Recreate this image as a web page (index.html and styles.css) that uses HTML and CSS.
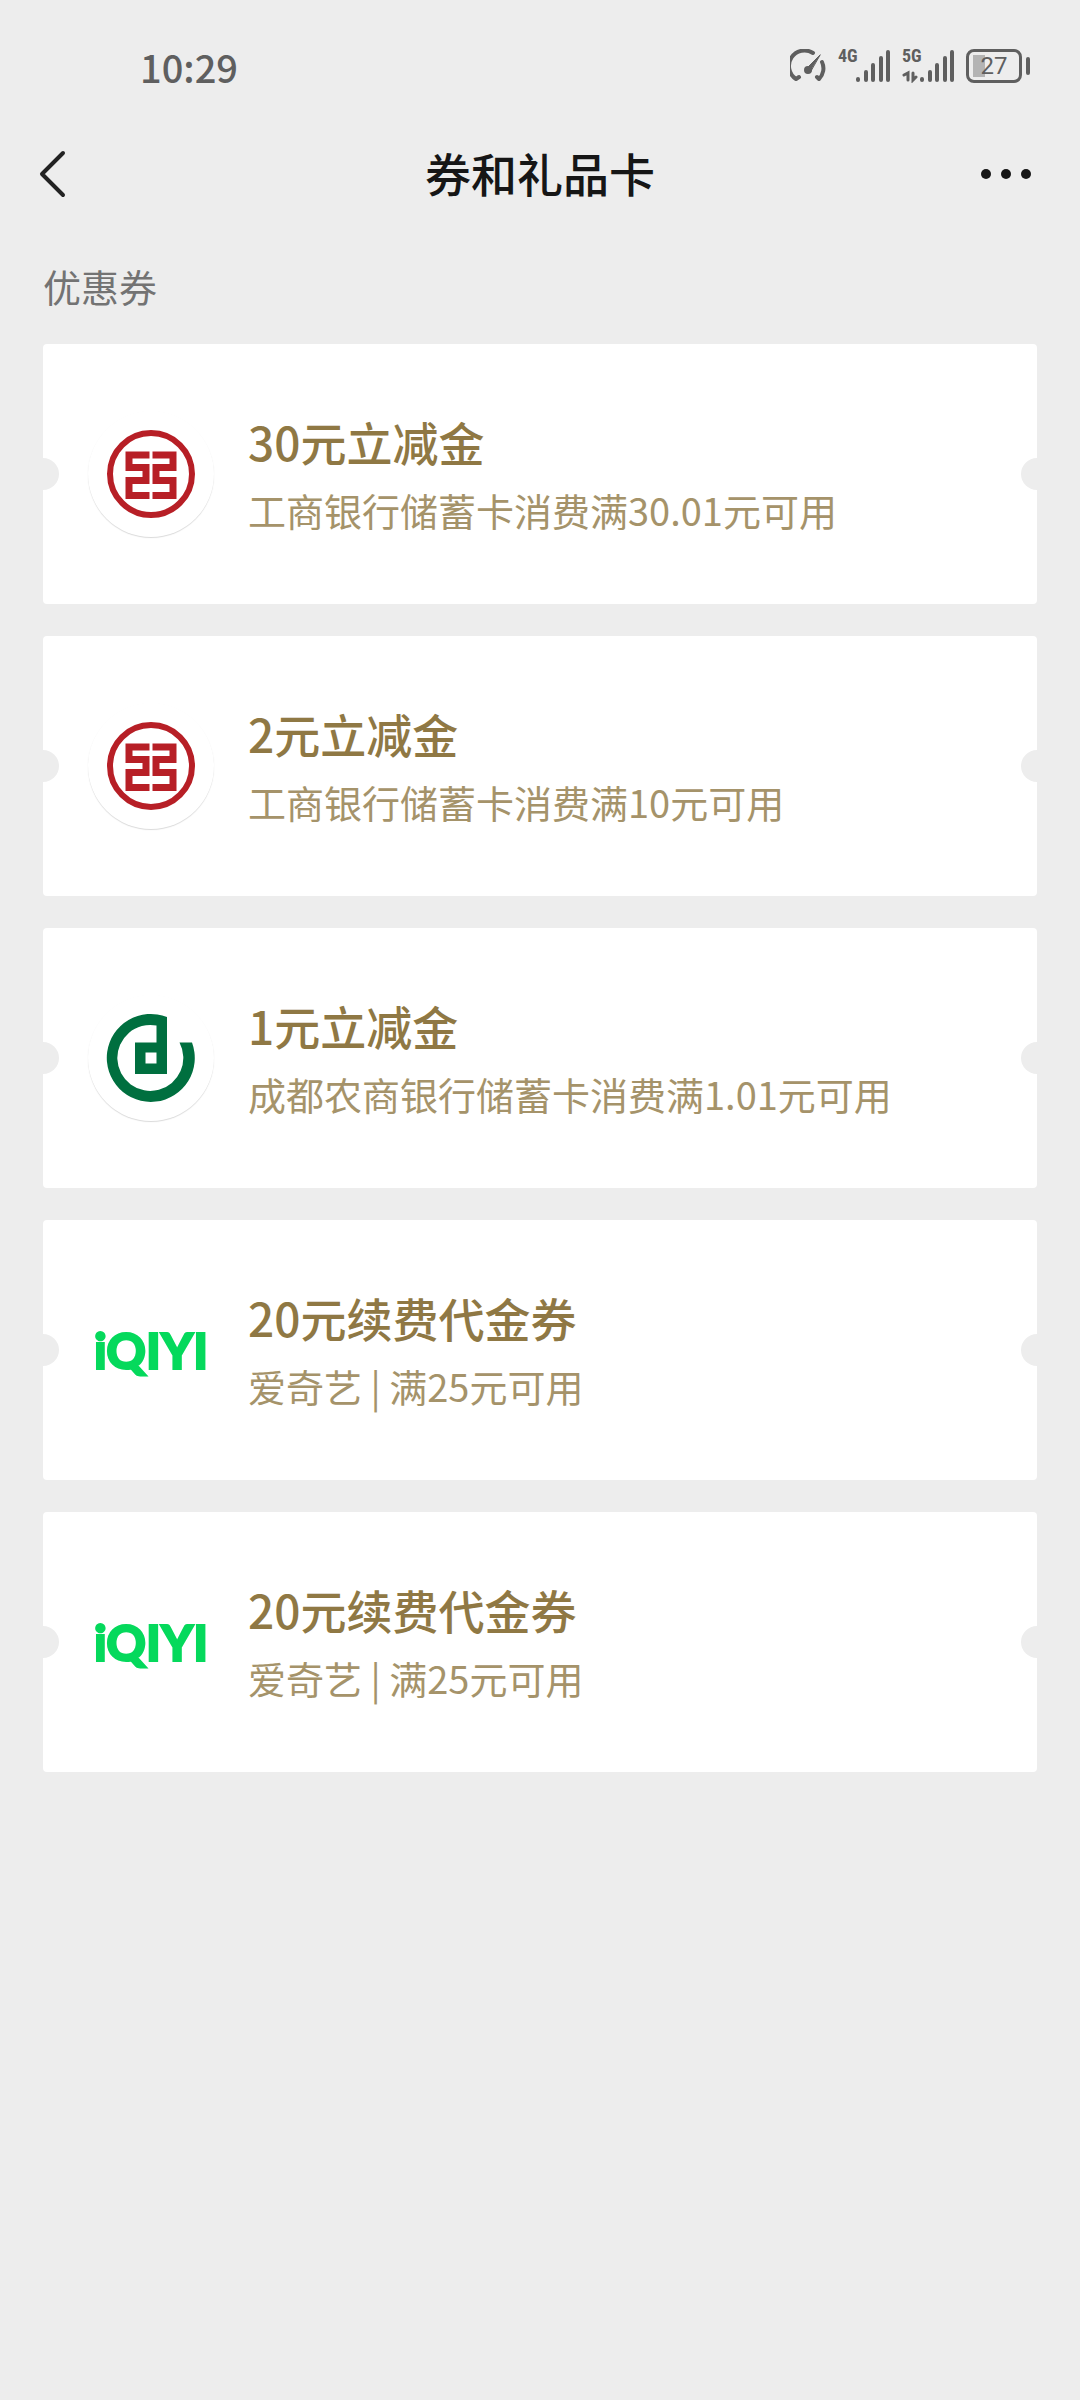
FILE: index.html
```
<!DOCTYPE html>
<html lang="zh-CN">

<head>
    <meta charset="UTF-8" />
    <meta name="viewport" content="width=device-width, initial-scale=1.0" />
    <title>券和礼品卡</title>
    <link rel="stylesheet" href="styles.css">
</head>

<body>
    <!-- logos reused by the coupons -->
    <svg class="defs" aria-hidden="true">
        <symbol id="icbc" viewBox="0 0 126 126">
            <circle cx="63" cy="63" r="41" fill="none" stroke="#b71f26" stroke-width="6" />
            <g fill="none" stroke="#b71f26" stroke-width="7">
                <path d="M61.5 44H41V56.5H58V69.5H41V84.5H61.5" />
                <path d="M64.5 44H85V56.5H68V69.5H85V84.5H64.5" />
            </g>
        </symbol>
        <symbol id="cdrcb" viewBox="0 0 126 126">
            <path d="M79 22A44 44 0 1 0 104 47.5H91.5A33 33 0 1 1 68.5 30.5V47.5H47V79H79ZM57.5 57.5V68.5H68.5V57.5Z" fill="#006f3f" fill-rule="evenodd" />
        </symbol>
    </svg>

    <div class="status-bar">
        <span class="time">10:29</span>
        <div class="status-icons">
            <svg width="36" height="34" viewBox="0 0 36 34" fill="none" stroke="#5f5f5f" stroke-width="4" stroke-linecap="round" stroke-linejoin="round">
                <path d="M23 4A15 15 0 0 0 6 30L9 28" />
                <path d="M32 13A15 15 0 0 1 29 30L27 28" />
                <path d="M30 6L16 20L20 23Z" fill="#5f5f5f" stroke-width="1" />
                <circle cx="18" cy="21" r="2" fill="#5f5f5f" />
            </svg>
            <div class="signal">
                <span class="network">4G</span>
                <svg width="52" height="34" viewBox="0 0 52 34" stroke="#5f5f5f" stroke-width="4" stroke-linecap="round">
                    <path d="M20 30V31M28 23V31M35 16V31M43 9V31M50 3V31" />
                </svg>
            </div>
            <div class="signal">
                <span class="network">5G</span>
                <svg width="52" height="34" viewBox="0 0 52 34" stroke="#5f5f5f" stroke-width="4" stroke-linecap="round">
                    <path d="M20 30V31M28 23V31M35 16V31M43 9V31M50 3V31" />
                    <path d="M6 31V24L2 26M11 24V31L14 28" fill="none" stroke-width="3" />
                </svg>
            </div>
            <div class="battery">27</div>
        </div>
    </div>

    <header class="nav">
        <button class="nav-btn" aria-label="返回">
            <svg width="28" height="48" viewBox="0 0 28 48" fill="none" stroke="#222" stroke-width="4" stroke-linecap="round" stroke-linejoin="round">
                <path d="M24 3L3 24L24 45" />
            </svg>
        </button>
        <h1>券和礼品卡</h1>
        <button class="nav-btn more" aria-label="更多">
            <svg width="50" height="10" viewBox="0 0 50 10" fill="#161616">
                <circle cx="5" cy="5" r="5" />
                <circle cx="25" cy="5" r="5" />
                <circle cx="45" cy="5" r="5" />
            </svg>
        </button>
    </header>

    <main>
        <h2>优惠券</h2>
        <ul class="coupons">
            <li class="coupon">
                <div class="logo round"><svg><use href="#icbc" /></svg></div>
                <div class="info">
                    <h3>30元立减金</h3>
                    <p>工商银行储蓄卡消费满30.01元可用</p>
                </div>
            </li>
            <li class="coupon">
                <div class="logo round"><svg><use href="#icbc" /></svg></div>
                <div class="info">
                    <h3>2元立减金</h3>
                    <p>工商银行储蓄卡消费满10元可用</p>
                </div>
            </li>
            <li class="coupon">
                <div class="logo round"><svg><use href="#cdrcb" /></svg></div>
                <div class="info">
                    <h3>1元立减金</h3>
                    <p>成都农商银行储蓄卡消费满1.01元可用</p>
                </div>
            </li>
            <li class="coupon">
                <div class="logo iqiyi">iQIYI</div>
                <div class="info">
                    <h3>20元续费代金券</h3>
                    <p>爱奇艺 | 满25元可用</p>
                </div>
            </li>
            <li class="coupon">
                <div class="logo iqiyi">iQIYI</div>
                <div class="info">
                    <h3>20元续费代金券</h3>
                    <p>爱奇艺 | 满25元可用</p>
                </div>
            </li>
        </ul>
    </main>
</body>

</html>
```
FILE: styles.css
```
* {
    box-sizing: border-box;
}

body {
    margin: 0;
    min-height: 100vh;
    background: #ededed;
    font-family: "Noto Sans CJK SC", sans-serif;
    color: #161616;
}

h1, h2, h3, p, ul {
    margin: 0;
    padding: 0;
}

.defs {
    display: none;
}

/* status bar */
.status-bar {
    display: flex;
    align-items: center;
    justify-content: space-between;
    height: 132px;
    padding: 0 50px 0 140px;
    color: #5f5f5f;
}

.time {
    font-size: 38px;
    font-weight: 500;
}

.status-icons {
    display: flex;
    align-items: center;
    gap: 12px;
}

.status-icons svg {
    display: block;
}

.signal {
    position: relative;
}

.network {
    position: absolute;
    top: 0;
    left: 0;
    font: bold 18px/14px "Liberation Sans Narrow", "Roboto Condensed", Roboto, sans-serif;
}

.battery {
    position: relative;
    width: 56px;
    height: 34px;
    margin-right: 8px;
    border: 3px solid #5f5f5f;
    border-radius: 8px;
    background: linear-gradient(#b4b4b4, #b4b4b4) 4px center / 12px 22px no-repeat;
    font: 24px/28px Roboto, sans-serif;
    text-align: center;
}

.battery::after {
    content: "";
    position: absolute;
    top: 5px;
    right: -11px;
    width: 4px;
    height: 18px;
    border-radius: 2px;
    background: #5f5f5f;
}

/* title bar */
.nav {
    display: flex;
    align-items: center;
    justify-content: space-between;
    height: 84px;
    padding: 0 39px;
}

.nav h1 {
    padding-bottom: 4px;
    font-size: 46px;
    font-weight: 500;
    line-height: 66px;
}

.nav-btn {
    display: flex;
    align-items: center;
    width: 72px;
    height: 84px;
    padding: 0;
    border: 0;
    background: none;
}

.more {
    justify-content: flex-end;
    padding-right: 10px;
}

/* coupons */
main {
    padding: 44px 43px;
}

h2 {
    margin-bottom: 32px;
    color: #737373;
    font-size: 38px;
    font-weight: 400;
    line-height: 52px;
}

.coupons {
    display: flex;
    flex-direction: column;
    gap: 32px;
    list-style: none;
}

.coupon {
    position: relative;
    display: flex;
    align-items: center;
    gap: 34px;
    min-height: 260px;
    padding: 0 45px;
    border-radius: 4px;
    background: #fff;
    overflow: hidden;
}

/* ticket notches */
.coupon::before,
.coupon::after {
    content: "";
    position: absolute;
    top: 50%;
    width: 32px;
    height: 32px;
    margin-top: -16px;
    border-radius: 50%;
    background: #ededed;
}

.coupon::before {
    left: -16px;
}

.coupon::after {
    right: -16px;
}

.logo {
    flex: none;
    width: 126px;
    height: 126px;
}

.logo svg {
    display: block;
    width: 100%;
    height: 100%;
}

.round {
    border-radius: 50%;
    box-shadow: 0 1px 1px rgba(0, 0, 0, 0.15);
}

.iqiyi {
    color: #05d95c;
    font: 900 49px/126px Lato, sans-serif;
    text-align: center;
    -webkit-text-stroke: 2px #05d95c;
}

.info {
    padding-bottom: 4px;
}

.info h3 {
    margin-bottom: 10px;
    color: #8f7844;
    font-size: 46px;
    font-weight: 500;
    line-height: 66px;
}

.info p {
    color: #a5936a;
    font-size: 38px;
    line-height: 52px;
}
```
